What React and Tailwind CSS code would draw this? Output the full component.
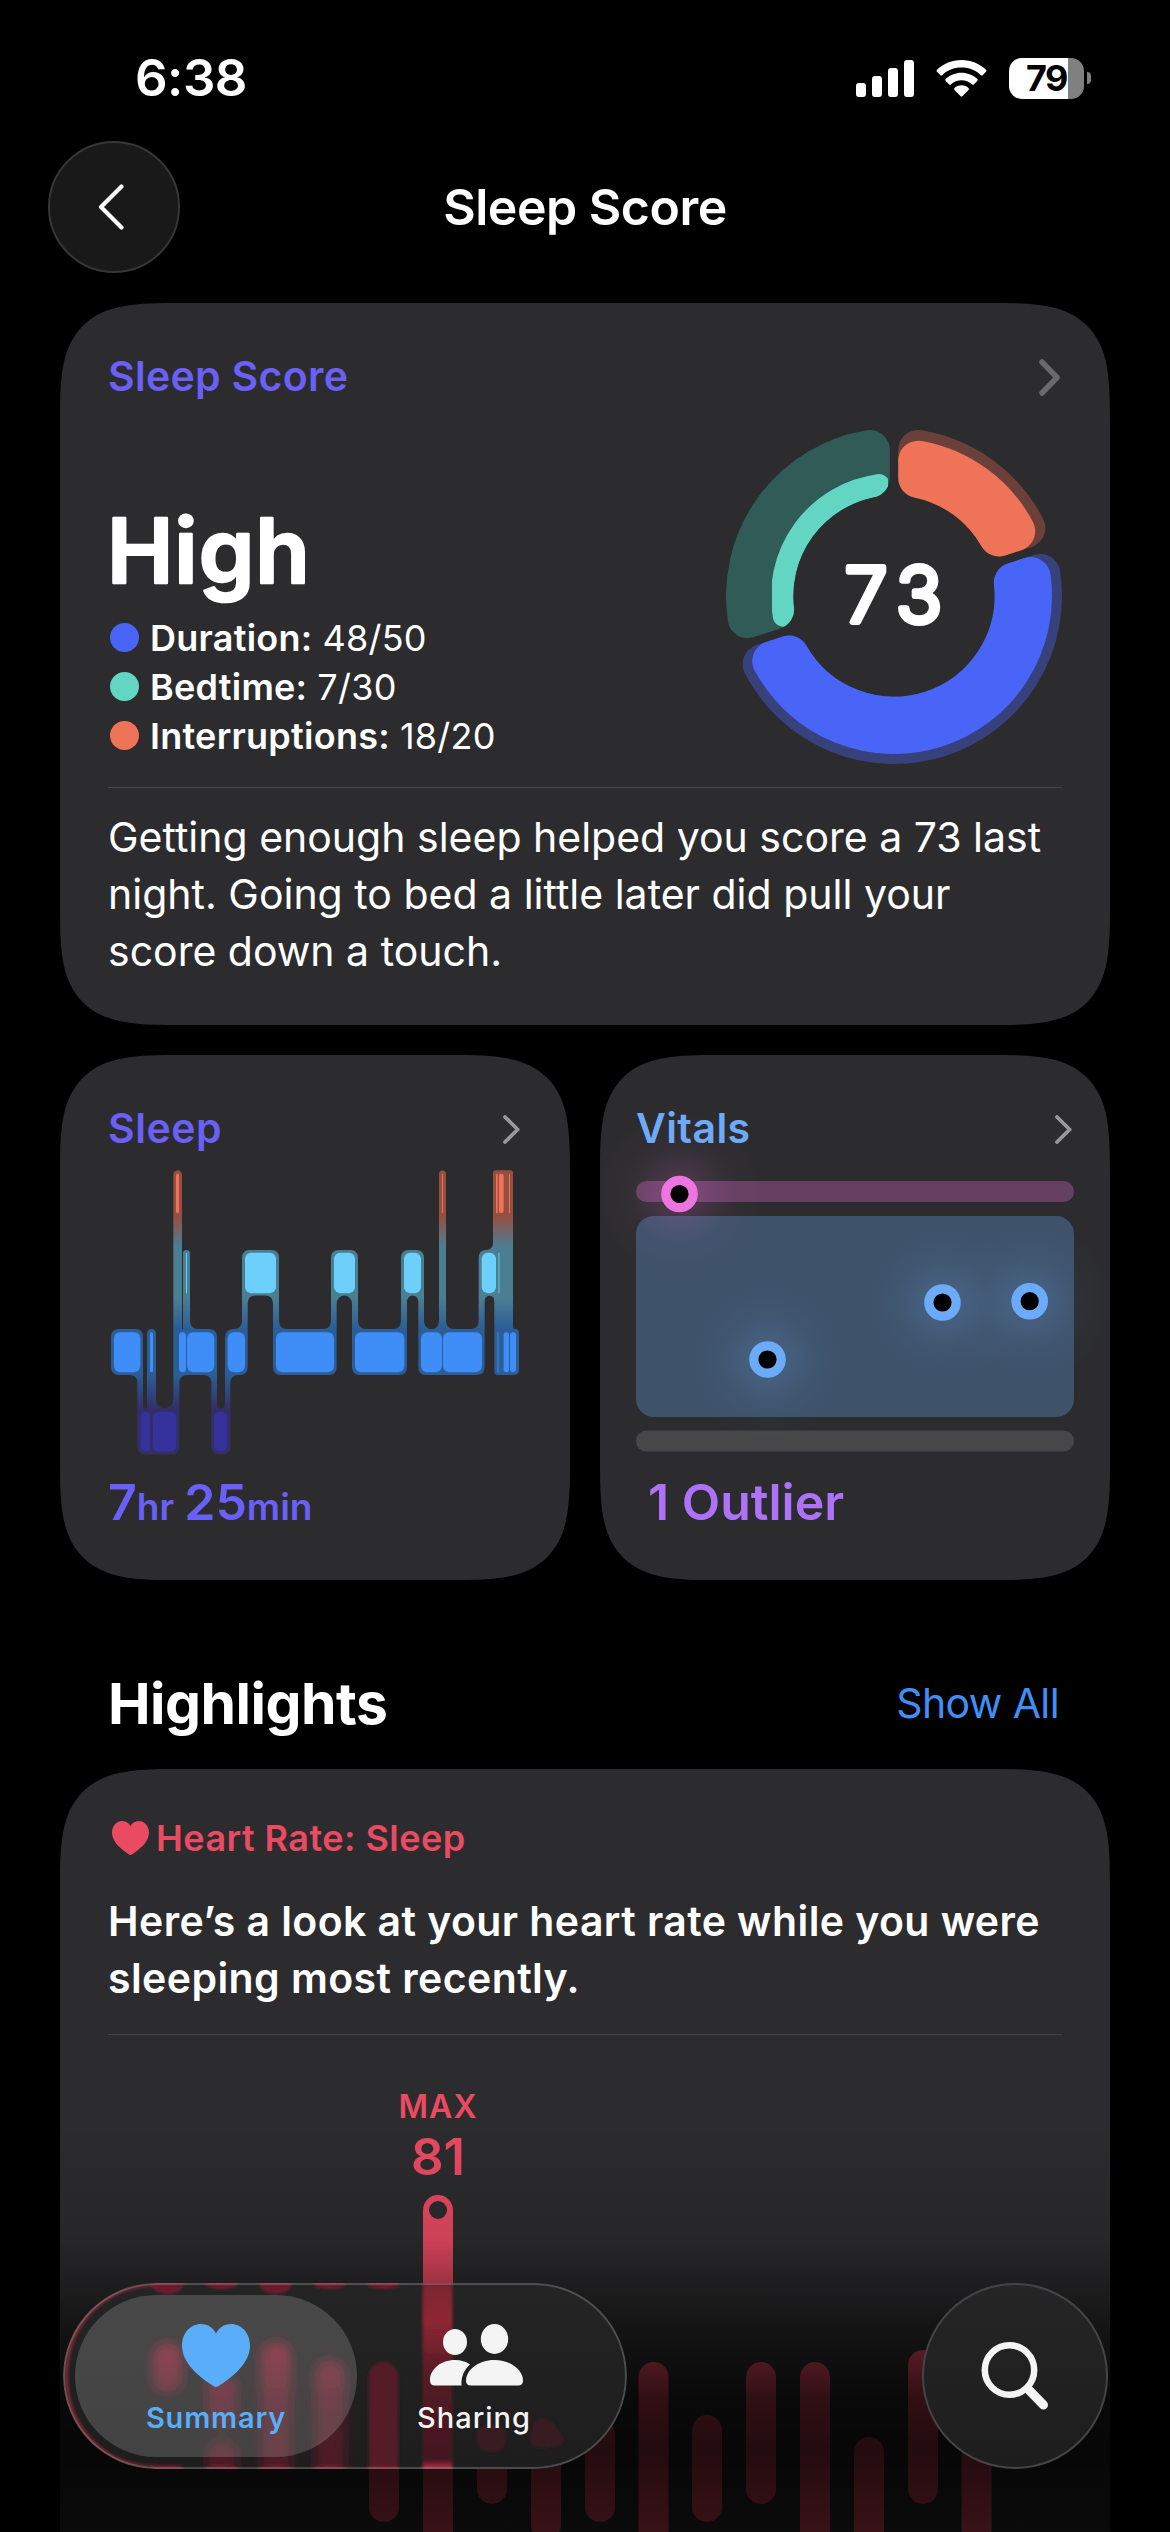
// src/pages/SleepScore.jsx
import { useId } from 'react'

const LEGEND = [
  { label: 'Duration:', value: '48/50', dot: 'bg-[#4965f7]' },
  { label: 'Bedtime:', value: '7/30', dot: 'bg-[#63d6c3]' },
  { label: 'Interruptions:', value: '18/20', dot: 'bg-[#ee7357]' },
]

// start / end in degrees clockwise from 12 o'clock, outer = radius of the filled part
const SEGMENTS = [
  { start: 0, end: 72, track: '#6b4039', fill: '#ee7357', outer: 157.5, r: 20 },
  { start: 72, end: 252, track: '#37417c', fill: '#4965f7', outer: 158, r: 20 },
  { start: 252, end: 360, track: '#315b57', fill: '#63d6c3', outer: 123, r: 11 },
]

const STAGES = [
  { fill: '#ef7358', y: 360, h: 114, spans: [[348, 357], [1146, 1149], [1308, 1313], [1317, 1331], [1347, 1350]] },
  { fill: '#6cd0fa', y: 589, h: 117, spans: [[378, 381], [555, 648], [822, 885], [1032, 1083], [1265, 1308]] },
  { fill: '#3f8ef8', y: 819, h: 116, spans: [[162, 241], [270, 279], [357, 378], [381, 463], [503, 555], [648, 822], [885, 1033], [1083, 1146], [1149, 1266], [1331, 1347], [1350, 1368]] },
  { fill: '#36329c', y: 1050, h: 115, spans: [[241, 270], [279, 349], [462, 502]] },
]

const SLEEP_OUTLINE =
  'M153 834V919Q153 943 177 943H208Q232 943 232 967V1149Q232 1173 256 1173H334Q358 1173 358 1149V967Q358 943 382 943H430Q454 943 454 967V1149Q454 1173 478 1173H487Q511 1173 511 1149V967Q511 943 535 943H539Q563 943 563 919V737Q563 713 587 713H615Q639 713 639 737V919Q639 943 663 943H806Q830 943 830 919V736A23 23 0 0 1 876 736V919Q876 943 900 943H1017Q1041 943 1041 919V730A17 17 0 0 1 1075 730V919Q1075 943 1099 943H1250Q1274 943 1274 919V728A14.500 14.500 0 0 1 1303 728V933Q1303 943 1313 943H1363Q1377 943 1377 929V824Q1377 810 1366 810Q1359 810 1359 800V358Q1359 350 1351 350H1307Q1299 350 1299 358V560Q1299 581 1278 581Q1256 581 1256 605V786Q1256 810 1232 810H1182Q1158 810 1158 786V361A10.500 10.500 0 0 0 1137 361V788A22.500 22.500 0 0 1 1092 788V605Q1092 581 1068 581H1047Q1023 581 1023 605V786Q1023 810 999 810H918Q894 810 894 786V605Q894 581 870 581H837Q813 581 813 605V786Q813 810 789 810H681Q657 810 657 786V605Q657 581 633 581H570Q546 581 546 605V786Q546 810 522 810Q495 810 495 836V1030Q495 1040 483 1040Q471 1040 471 1030V834Q471 810 447 810H414Q390 810 390 786V591A10.500 10.500 0 0 0 369 591V810H366V363A13 13 0 0 0 340 363V1014A26 26 0 0 1 288 1014V823A13.500 13.500 0 0 0 261 823V1040H249V834Q249 810 225 810H177Q153 810 153 834Z'

const VITALS = [
  { x: 43.5, y: 13, color: '#ed75e0' },
  { x: 131.5, y: 178.5, color: '#6cabf9' },
  { x: 306.5, y: 121.5, color: '#6cabf9' },
  { x: 393.7, y: 120.2, color: '#6cabf9' },
]

// x, top, bottom
const HEART_BARS = [
  [369, 2362, 2522], [477, 2420, 2504], [531, 2400, 2540], [585, 2420, 2522], [638.5, 2362, 2560],
  [692, 2415, 2522], [746, 2362, 2504], [800, 2362, 2560], [854, 2437, 2560], [908, 2350, 2504], [961.5, 2440, 2560],
]

const squircle = 'rounded-[78px] supports-[corner-shape:squircle]:rounded-[119px] supports-[corner-shape:squircle]:[corner-shape:superellipse(1.7)]'

function sectorPath(start, end, inner, outer, r) {
  const point = (radius, deg, dir) => {
    const a = (deg * Math.PI) / 180 + dir * Math.asin((4.2 + r) / radius)
    return `${(168 + radius * Math.sin(a)).toFixed(2)} ${(168 - radius * Math.cos(a)).toFixed(2)}`
  }
  const o = outer - r
  const i = inner + r
  return `M${point(o, start, 1)}A${o} ${o} 0 0 1 ${point(o, end, -1)}L${point(i, end, -1)}A${i} ${i} 0 0 0 ${point(i, start, 1)}Z`
}

function Sector({ start, end, outer, r, color }) {
  return (
    <path d={sectorPath(start, end, 100.6, outer, r)} fill={color} stroke={color} strokeWidth={r * 2} strokeLinejoin="round" />
  )
}

function Chevron({ big }) {
  return big ? (
    <svg width="21" height="37" viewBox="0 0 21 37" fill="none" stroke="#69696e" strokeWidth="5.500" strokeLinecap="round" strokeLinejoin="round">
      <path d="M3 3l15 15.500L3 34" />
    </svg>
  ) : (
    <svg width="17" height="29" viewBox="0 0 17 29" fill="none" stroke="#98989d" strokeWidth="3.800" strokeLinecap="round" strokeLinejoin="round">
      <path d="M2 2l12.700 12.500L2 27" />
    </svg>
  )
}

function Heart({ className }) {
  return (
    <svg className={className} viewBox="0 0 68 63" preserveAspectRatio="none" fill="currentColor">
      <path d="M34 63C32.500 63 30.500 61.500 28 59.800C12 49 0 36.500 0 21.500C0 9 8.500 0 19 0C26 0 31.500 4 34 9.500C36.500 4 42 0 49 0C59.500 0 68 9 68 21.500C68 36.500 56 49 40 59.800C37.500 61.500 35.500 63 34 63Z" />
    </svg>
  )
}

function StatusBar() {
  return (
    <div className="mt-12 flex h-[60px] items-center justify-between pl-[135px] pr-[79px]">
      <span className="text-[51px] font-semibold leading-[60px] tracking-[-0.5px]">6:38</span>
      <div className="flex items-center">
        <svg width="58" height="37" viewBox="0 0 58 37" fill="#fff">
          <rect x="0" y="23" width="10" height="14" rx="3" />
          <rect x="16" y="16" width="10" height="21" rx="3" />
          <rect x="32" y="8" width="10" height="29" rx="3" />
          <rect x="48" y="0" width="10" height="37" rx="3" />
        </svg>
        <svg className="ml-[22px]" width="51" height="37" viewBox="0 0 51 37" fill="#fff">
          <path d="M25.500 0C35 0 43.500 3.700 50 9.700Q51 10.700 50 11.700L46.800 15Q45.800 16 44.700 15C39.700 10.200 33 7.600 25.500 7.600S11.300 10.200 6.300 15Q5.200 16 4.200 15L1 11.700Q0 10.700 1 9.700C7.500 3.700 16 0 25.500 0Z" />
          <path d="M25.500 12.700C31.500 12.700 37 15 41.200 18.800Q42.300 19.800 41.300 20.900L38 24.200Q37 25.200 35.900 24.200C33 21.700 29.500 20.300 25.500 20.300S18 21.700 15.100 24.200Q14 25.200 13 24.200L9.700 20.900Q8.700 19.800 9.800 18.800C14 15 19.500 12.700 25.500 12.700Z" />
          <path d="M25.500 25.300C28.300 25.300 30.600 26.300 32.500 27.900Q33.500 28.900 32.500 29.900L26.600 36Q25.500 37 24.400 36L18.500 29.900Q17.500 28.900 18.500 27.900C20.400 26.300 22.700 25.300 25.500 25.300Z" />
        </svg>
        <div className="ml-[22px] flex h-[41px] w-[75px] items-center justify-center rounded-[13px] bg-linear-to-r from-white from-79% to-[#808080] to-79% text-[36px] font-bold leading-[41px] tracking-[-1.5px] text-black">
          79
        </div>
        <div className="ml-[3px] h-[12px] w-[4px] rounded-r-full bg-[#808080]" />
      </div>
    </div>
  )
}

function ScoreRing() {
  return (
    <svg className="mr-[-2px] shrink-0" width="336" height="336" viewBox="0 0 336 336">
      <mask id="bedtime-track">
        <Sector {...SEGMENTS[2]} outer={168} r={20} color="#fff" />
      </mask>
      {SEGMENTS.map(s => (
        <g key={s.start}>
          <Sector {...s} outer={168} r={20} color={s.track} />
          <g mask={s.start === 252 ? 'url(#bedtime-track)' : undefined}>
            <Sector {...s} color={s.fill} />
          </g>
        </g>
      ))}
      <text x="172.500" y="193.500" textAnchor="middle" fontSize="76" fontWeight="300" letterSpacing="10" fill="#fff" stroke="#fff" strokeWidth="6" strokeLinejoin="round">73</text>
    </svg>
  )
}

function SleepChart() {
  const id = useId()
  return (
    <svg className="mt-[21px] h-[285px] w-[410px]" viewBox="150 349 1230 826" preserveAspectRatio="none">
      <linearGradient id={id} gradientUnits="userSpaceOnUse" x1="0" y1="350" x2="0" y2="1173">
        <stop offset="0.16" stopColor="#964e41" />
        <stop offset="0.27" stopColor="#4a7e93" />
        <stop offset="0.45" stopColor="#4a7e93" />
        <stop offset="0.56" stopColor="#2c5d96" />
        <stop offset="0.72" stopColor="#2c5d96" />
        <stop offset="0.84" stopColor="#322f68" />
      </linearGradient>
      <path d={SLEEP_OUTLINE} fill={`url(#${id})`} />
      <rect x="1311" y="819" width="6" height="116" fill="#3675bd" />
      <rect x="1314" y="589" width="6" height="117" fill="#5ba3bd" />
      {STAGES.map(stage => stage.spans.map(([x1, x2]) => (
        <rect key={`${stage.y}-${x1}`} x={x1} y={stage.y} width={x2 - x1} height={stage.h} rx={Math.min(18, (x2 - x1) / 2)} fill={stage.fill} />
      )))}
    </svg>
  )
}

function VitalsChart() {
  return (
    <svg className="mt-[32px] overflow-visible" width="438" height="271" viewBox="0 0 438 271">
      <defs>
        {VITALS.map((v, i) => (
          <radialGradient key={i} id={`glow-${i}`}>
            <stop offset="0" stopColor={v.color} stopOpacity="0.26" />
            <stop offset="0.25" stopColor={v.color} stopOpacity="0.14" />
            <stop offset="0.6" stopColor={v.color} stopOpacity="0.035" />
            <stop offset="1" stopColor={v.color} stopOpacity="0" />
          </radialGradient>
        ))}
      </defs>
      <rect width="438" height="21" rx="10.500" fill="#664063" />
      <rect y="35" width="438" height="201" rx="18" fill="#3e5269" />
      <rect y="249.500" width="438" height="21" rx="10.500" fill="#474748" />
      {VITALS.map((v, i) => <circle key={i} cx={v.x} cy={v.y} r="82" fill={`url(#glow-${i})`} />)}
      {VITALS.map((v, i) => (
        <circle key={i} cx={v.x} cy={v.y} r="13.700" fill="#000" stroke={v.color} strokeWidth="9.200" />
      ))}
    </svg>
  )
}

function HeartChart() {
  return (
    <svg className="mt-1" width="1050" height="342" viewBox="60 2190 1050 342">
      {HEART_BARS.map(([x, top, bottom]) => (
        <rect key={x} x={x} y={top} width="30" height={bottom - top} rx="15" fill="#ea4a62" />
      ))}
      <rect x="423" y="2195" width="30" height="380" rx="15" fill="#ea4a62" />
      <circle cx="438" cy="2210" r="9" fill="#2c2c2e" />
    </svg>
  )
}

// Chart bars as they show through the tab bar glass
function GlassBars() {
  return (
    <svg className="absolute inset-0" width="563" height="186" viewBox="63.500 2283 563 186">
      <defs>
        <linearGradient id="glass-main" x1="0" y1="0" x2="0" y2="1">
          <stop offset="0" stopColor="#7a2430" />
          <stop offset="0.2" stopColor="#8e2633" />
          <stop offset="0.5" stopColor="#521b25" />
          <stop offset="0.95" stopColor="#421720" />
          <stop offset="1" stopColor="#c03048" />
        </linearGradient>
        <linearGradient id="glass-bar" gradientUnits="userSpaceOnUse" x1="0" y1="2342" x2="0" y2="2469">
          <stop offset="0" stopColor="#801e30" />
          <stop offset="0.6" stopColor="#5e1c2a" stopOpacity="0.7" />
          <stop offset="1" stopColor="#5e1c2a" stopOpacity="0.75" />
        </linearGradient>
        <linearGradient id="glass-rim" x1="0" y1="0" x2="1" y2="0">
          <stop offset="0" stopColor="#a02c42" />
          <stop offset="1" stopColor="#5e1c2a" />
        </linearGradient>
        <filter id="soft" x="-50%" y="-20%" width="200%" height="140%"><feGaussianBlur stdDeviation="6" /></filter>
        <filter id="softer" x="-20%" y="-20%" width="140%" height="140%"><feGaussianBlur stdDeviation="1.500" /></filter>
      </defs>
      <g filter="url(#soft)" fill="url(#glass-bar)">
        <rect x="153" y="2343" width="30" height="50" rx="14" />
        <rect x="207" y="2376" width="31" height="52" rx="14" />
        <rect x="207" y="2440" width="31" height="50" rx="14" />
        <rect x="261" y="2342" width="31" height="150" rx="15" />
        <rect x="315" y="2360" width="31" height="130" rx="15" />
      </g>
      <g filter="url(#softer)">
        <rect x="369" y="2362" width="30" height="130" rx="15" fill="#531b27" />
        <rect x="423" y="2283" width="30" height="186" fill="url(#glass-main)" />
        <path d="M477 2431Q492 2418 507 2431V2438Q507 2452 492 2452T477 2438Z" fill="#391a20" />
        <path d="M531 2440Q531 2418 544 2418Q553 2419 564 2438Q566 2446 550 2447Q531 2450 531 2440Z" fill="#391a20" />
        {[153, 207, 261, 315, 369].map((x, i) => (
          <g key={x} fill="#6b1e2d">
            <ellipse cx={x + 15} cy="2284" rx="16" ry={i % 2 || i === 4 ? 5 : 10} />
            <ellipse cx={x + 15} cy="2469" rx="16" ry="4" />
          </g>
        ))}
        <path d="M180 2285.500H156C103 2286 67 2326 67 2376S103 2466 156 2466.500H182" fill="none" stroke="url(#glass-rim)" strokeWidth="2.500" />
      </g>
    </svg>
  )
}

function TabBar() {
  return (
    <div className="absolute bottom-[63px] left-[63px] flex w-[1045px] justify-between">
      <div className="relative flex h-[186px] w-[564px] items-center overflow-hidden rounded-full bg-linear-to-b from-[#242424] to-[#1d1d1d] pl-3">
        <GlassBars />
        <div className="relative flex h-[162px] w-[282px] flex-col items-center rounded-full bg-white/17 pt-[29px] text-[#5aadf8]">
          <Heart className="h-[63px] w-[68px]" />
          <span className="mt-[13px] text-[29px] font-semibold leading-[36px] tracking-[0.8px]">Summary</span>
        </div>
        <div className="relative flex h-[162px] w-[234px] flex-col items-center pt-[29px] text-[#f4f4f4]">
          <svg className="ml-1" width="93" height="62" viewBox="0 0 93 62" fill="currentColor">
            <ellipse cx="25" cy="18" rx="12" ry="13" />
            <ellipse cx="64.500" cy="15" rx="13.700" ry="15" />
            <path d="M25 36C31 36 36 37.500 40 40.500C34 46 31 52.500 31.500 61.500H5Q0 61.500 0 56.500C0 45 11 36 25 36Z" />
            <path d="M64.500 36C81 36 93 46.500 93 56.500Q93 61.500 88 61.500H41Q36 61.500 36 56.500C36 46.500 48 36 64.500 36Z" />
          </svg>
          <span className="mt-[14px] text-[29px] font-medium leading-[36px] tracking-[1px]">Sharing</span>
        </div>
        <div className="absolute inset-0 rounded-full border-2 border-white/20" />
      </div>
      <div className="flex h-[186px] w-[186px] items-center justify-center rounded-full border-2 border-[#444446] bg-linear-to-b from-[#252526] to-[#1d1d1d]">
        <svg width="70" height="70" viewBox="0 0 70 70" fill="none" stroke="#f4f4f4" strokeLinecap="round">
          <circle cx="29.500" cy="29" r="24.700" strokeWidth="6.500" />
          <path d="M48 48L63.500 64" strokeWidth="9" />
        </svg>
      </div>
    </div>
  )
}

export default function App() {
  return (
    <div className="relative h-[2532px] w-[1170px] overflow-hidden bg-black font-['Inter','Liberation_Sans',sans-serif] text-white">
      <div className="flex h-full flex-col">
        <StatusBar />

        {/* Navigation */}
        <header className="mt-[33px] grid h-[132px] shrink-0 grid-cols-[132px_1fr_132px] items-center px-12">
          <button className="flex h-[132px] w-[132px] items-center justify-center rounded-full border-2 border-[#363636] bg-[#191919]">
            <svg className="mr-[6px]" width="26" height="46" viewBox="0 0 26 46" fill="none" stroke="#fff" strokeWidth="4.200" strokeLinecap="round" strokeLinejoin="round">
              <path d="M23.500 2.500L3 23l20.500 20.500" />
            </svg>
          </button>
          <h1 className="text-center text-[50px] font-semibold leading-[60px] tracking-[-0.5px]">Sleep Score</h1>
        </header>

        <main className="flex flex-col px-[60px]">
          {/* Score card */}
          <section className={`mt-[30px] h-[722px] shrink-0 bg-[#2c2c2e] pl-[48px] pr-[50px] pt-[54px] ${squircle}`}>
            <div className="flex h-10 items-center justify-between">
              <h2 className="text-[41px] font-semibold tracking-[0.3px] text-[#6a5ff6]">Sleep Score</h2>
              <Chevron big />
            </div>
            <div className="mt-[31px] flex h-[336px] justify-between">
              <div className="flex flex-col justify-end pb-1">
                <svg className="mb-[13px] overflow-visible" width="220" height="100" viewBox="0 0 220 100">
                  <text x="-1" y="82.500" fontSize="89" fontWeight="600" fill="#fff" stroke="#fff" strokeWidth="2.500" strokeLinejoin="round" letterSpacing="1">High</text>
                </svg>
                {LEGEND.map(item => (
                  <div key={item.label} className="flex h-[49px] items-center text-[36px] tracking-[0.25px]">
                    <span className={`ml-[2px] mr-[11px] h-[29px] w-[29px] rounded-full ${item.dot}`} />
                    <span className="font-semibold">{item.label}</span>
                    <span className="ml-[10px]">{item.value}</span>
                  </div>
                ))}
              </div>
              <ScoreRing />
            </div>
            <div className="mr-[-2px] mt-[23px] h-px bg-[#464648]" />
            <p className="mt-[21px] whitespace-nowrap text-[41px] leading-[57px]">
              Getting enough sleep helped you score a 73 last<br />
              night. Going to bed a little later did pull your<br />
              score down a touch.
            </p>
          </section>

          {/* Sleep and vitals */}
          <div className="mt-[30px] grid grid-cols-2 gap-[30px]">
            <section className={`h-[525px] bg-[#2c2c2e] px-[50px] pt-[54px] ${squircle}`}>
              <div className="-ml-[2px] flex h-10 items-center justify-between">
                <h2 className="text-[41px] font-semibold tracking-[0.5px] text-[#6a5ff6]">Sleep</h2>
                <Chevron />
              </div>
              <SleepChart />
              <p className="-ml-[2px] mt-[17px] whitespace-nowrap text-[50px] font-semibold leading-[60px] text-[#6a5ff6]">
                7<span className="text-[37px]">hr</span><span className="text-[40px]"> </span>25<span className="text-[37px]">min</span>
              </p>
            </section>
            <section className={`h-[525px] bg-[#2c2c2e] px-9 pt-[54px] ${squircle}`}>
              <div className="flex h-10 items-center justify-between pr-[2px]">
                <h2 className="text-[41px] font-semibold tracking-[0.4px] text-[#6cabf9]">Vitals</h2>
                <Chevron />
              </div>
              <VitalsChart />
              <p className="mt-5 pl-3 text-[50px] font-semibold leading-[60px] text-[#ad72f8]">1 Outlier</p>
            </section>
          </div>

          {/* Highlights */}
          <div className="mt-[93px] flex h-[60px] items-center justify-between pl-[48px] pr-[51px] pt-[1px]">
            <h2 className="text-[57px] font-bold tracking-[-0.5px]">Highlights</h2>
            <a className="text-[41px] tracking-[-0.6px] text-[#3f8ff7]">Show All</a>
          </div>
          <section className="relative mt-9 h-[763px] overflow-hidden">
            <div className={`h-[1000px] bg-[#2c2c2e] pt-[49px] ${squircle}`}>
              <div className="pl-[48px] pr-[50px]">
                <div className="flex h-10 items-center text-[#ea4a62]">
                  <Heart className="ml-1 h-[34px] w-[37px]" />
                  <h3 className="ml-[7px] text-[36px] font-semibold tracking-[0.45px]">Heart Rate: Sleep</h3>
                </div>
                <p className="mt-[35px] whitespace-nowrap text-[41px] font-semibold leading-[57px] tracking-[0.42px]">
                  Here’s a look at your heart rate while you were<br />
                  sleeping most recently.
                </p>
                <div className="mr-[-2px] mt-[27px] h-px bg-[#434345]" />
              </div>
              <div className="ml-[278px] mt-[52px] w-[200px] text-center font-semibold text-[#ea4a62]">
                <p className="text-[32px] leading-[40px] tracking-[1px]">MAX</p>
                <p className="text-[51px] leading-[59px]">81</p>
              </div>
              <HeartChart />
            </div>
            <div className="absolute inset-x-0 bottom-0 h-[412px] bg-[linear-gradient(to_bottom,transparent_0,rgba(0,0,0,0.13)_120px,rgba(0,0,0,0.36)_170px,rgba(0,0,0,0.6)_220px,rgba(0,0,0,0.8)_280px,rgba(0,0,0,0.85)_330px,rgba(0,0,0,0.76)_412px)]" />
          </section>
        </main>
      </div>

      <TabBar />
    </div>
  )
}
